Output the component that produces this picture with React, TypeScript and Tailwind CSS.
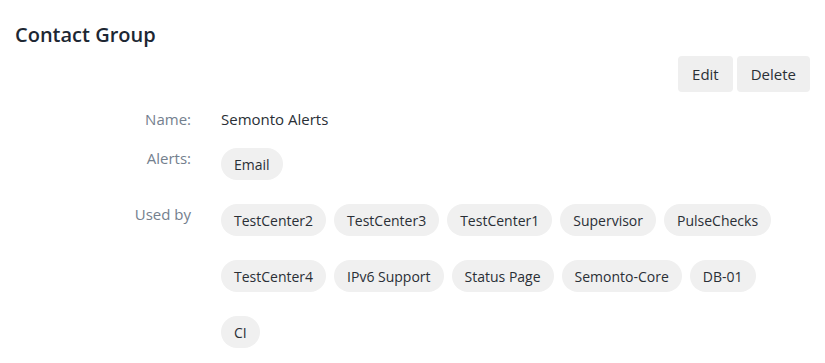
const usedBy = [
  ['TestCenter2', 'TestCenter3', 'TestCenter1', 'Supervisor', 'PulseChecks'],
  ['TestCenter4', 'IPv6 Support', 'Status Page', 'Semonto-Core', 'DB-01'],
  ['CI'],
]

function Pill({ children }: { children: React.ReactNode }) {
  return (
    <span className="inline-flex h-8 items-center rounded-full bg-[#f0f0f0] px-[13px] text-[14px] text-[#2a2f36]">
      {children}
    </span>
  )
}

export default function App() {
  return (
    <div className="min-h-screen bg-white px-[15px] pt-[20px] font-['Open_Sans',sans-serif] text-[#2a2f36]">
      <h1 className="text-[20px] font-semibold leading-[30px] text-[#1d2733]">Contact Group</h1>

      <div className="mt-[6px] flex justify-end gap-1">
        <button className="h-9 rounded bg-[#efefef] px-[14px] text-[15px] text-[#2a2f36]">Edit</button>
        <button className="h-9 rounded bg-[#efefef] px-[14px] text-[15px] text-[#2a2f36]">Delete</button>
      </div>

      <div className="mt-[15px] grid grid-cols-[176px_1fr] gap-x-[30px]">
        <div className="text-right text-[15px] leading-6 text-[#74808e]">Name:</div>
        <div className="text-[15px] leading-6">Semonto Alerts</div>

        <div className="mt-[17px] text-right text-[15px] leading-5 text-[#74808e]">Alerts:</div>
        <div className="mt-[17px]">
          <Pill>Email</Pill>
        </div>

        <div className="mt-6 text-right text-[15px] leading-5 text-[#74808e]">Used by</div>
        <div className="mt-6 flex flex-col gap-6">
          {usedBy.map((row, i) => (
            <div key={i} className="flex gap-2">
              {row.map((name) => (
                <Pill key={name}>{name}</Pill>
              ))}
            </div>
          ))}
        </div>
      </div>
    </div>
  )
}
